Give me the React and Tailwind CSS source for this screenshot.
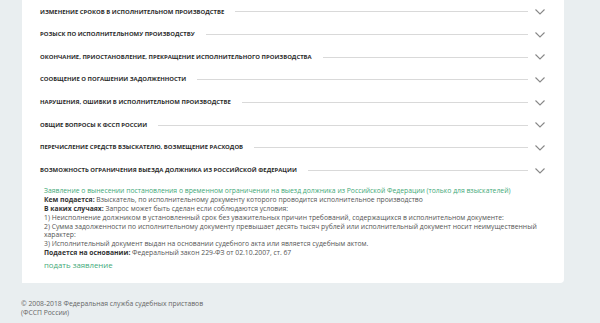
const sections = [
  'Изменение сроков в исполнительном производстве',
  'Розыск по исполнительному производству',
  'Окончание, приостановление, прекращение исполнительного производства',
  'Сообщение о погашении задолженности',
  'Нарушения, ошибки в исполнительном производстве',
  'Общие вопросы к ФССП России',
  'Перечисление средств взыскателю, возмещение расходов',
  'Возможность ограничения выезда должника из Российской Федерации',
];

function Chevron() {
  return (
    <svg width="10" height="6" viewBox="0 0 10 6" className="shrink-0">
      <polyline points="0.5,0.5 5,5 9.5,0.5" fill="none" stroke="#888" strokeWidth="1.1" />
    </svg>
  );
}

function Row({ title }) {
  return (
    <div className="h-[22.67px] flex items-center pl-[18px] pr-[19px]">
      <span className="text-[5.95px] font-bold uppercase text-[#2b2b2b] whitespace-nowrap">{title}</span>
      <div className="flex-1 h-px bg-[#d9d9d9] ml-[11px] mr-[7px]" />
      <Chevron />
    </div>
  );
}

export default function App() {
  return (
    <div className="w-[600px] h-[323px] bg-[#e9eef0] overflow-hidden" style={{ fontFamily: '"Open Sans", sans-serif' }}>
      <div className="ml-[22px] w-[542px] bg-white rounded-br-sm pt-[0.67px] pb-[12px]">
        {sections.map((s) => (
          <Row key={s} title={s} />
        ))}
        <div className="pl-[22px] pr-[24px] pt-[5px] text-[6.8px] leading-[8.9px] text-[#555]">
          <div className="text-[#43a979]">
            Заявление о вынесении постановления о временном ограничении на выезд должника из Российской Федерации (только для взыскателей)
          </div>
          <div>
            <b className="text-[#333]">Кем подается:</b> Взыскатель, по исполнительному документу которого проводится исполнительное производство
          </div>
          <div>
            <b className="text-[#333]">В каких случаях:</b> Запрос может быть сделан если соблюдаются условия:
          </div>
          <div>1) Неисполнение должником в установленный срок без уважительных причин требований, содержащихся в исполнительном документе:</div>
          <div>2) Сумма задолженности по исполнительному документу превышает десять тысяч рублей или исполнительный документ носит неимущественный характер:</div>
          <div>3) Исполнительный документ выдан на основании судебного акта или является судебным актом.</div>
          <div>
            <b className="text-[#333]">Подается на основании:</b> Федеральный закон 229-ФЗ от 02.10.2007, ст. 67
          </div>
          <div className="text-[#43a979] text-[7.8px] leading-[11px] mt-[2px]">подать заявление</div>
        </div>
      </div>
      <div className="pl-[21px] pt-[16px] text-[6.8px] leading-[9px] text-[#666]">
        <div>© 2008-2018 Федеральная служба судебных приставов</div>
        <div>(ФССП России)</div>
      </div>
    </div>
  );
}
